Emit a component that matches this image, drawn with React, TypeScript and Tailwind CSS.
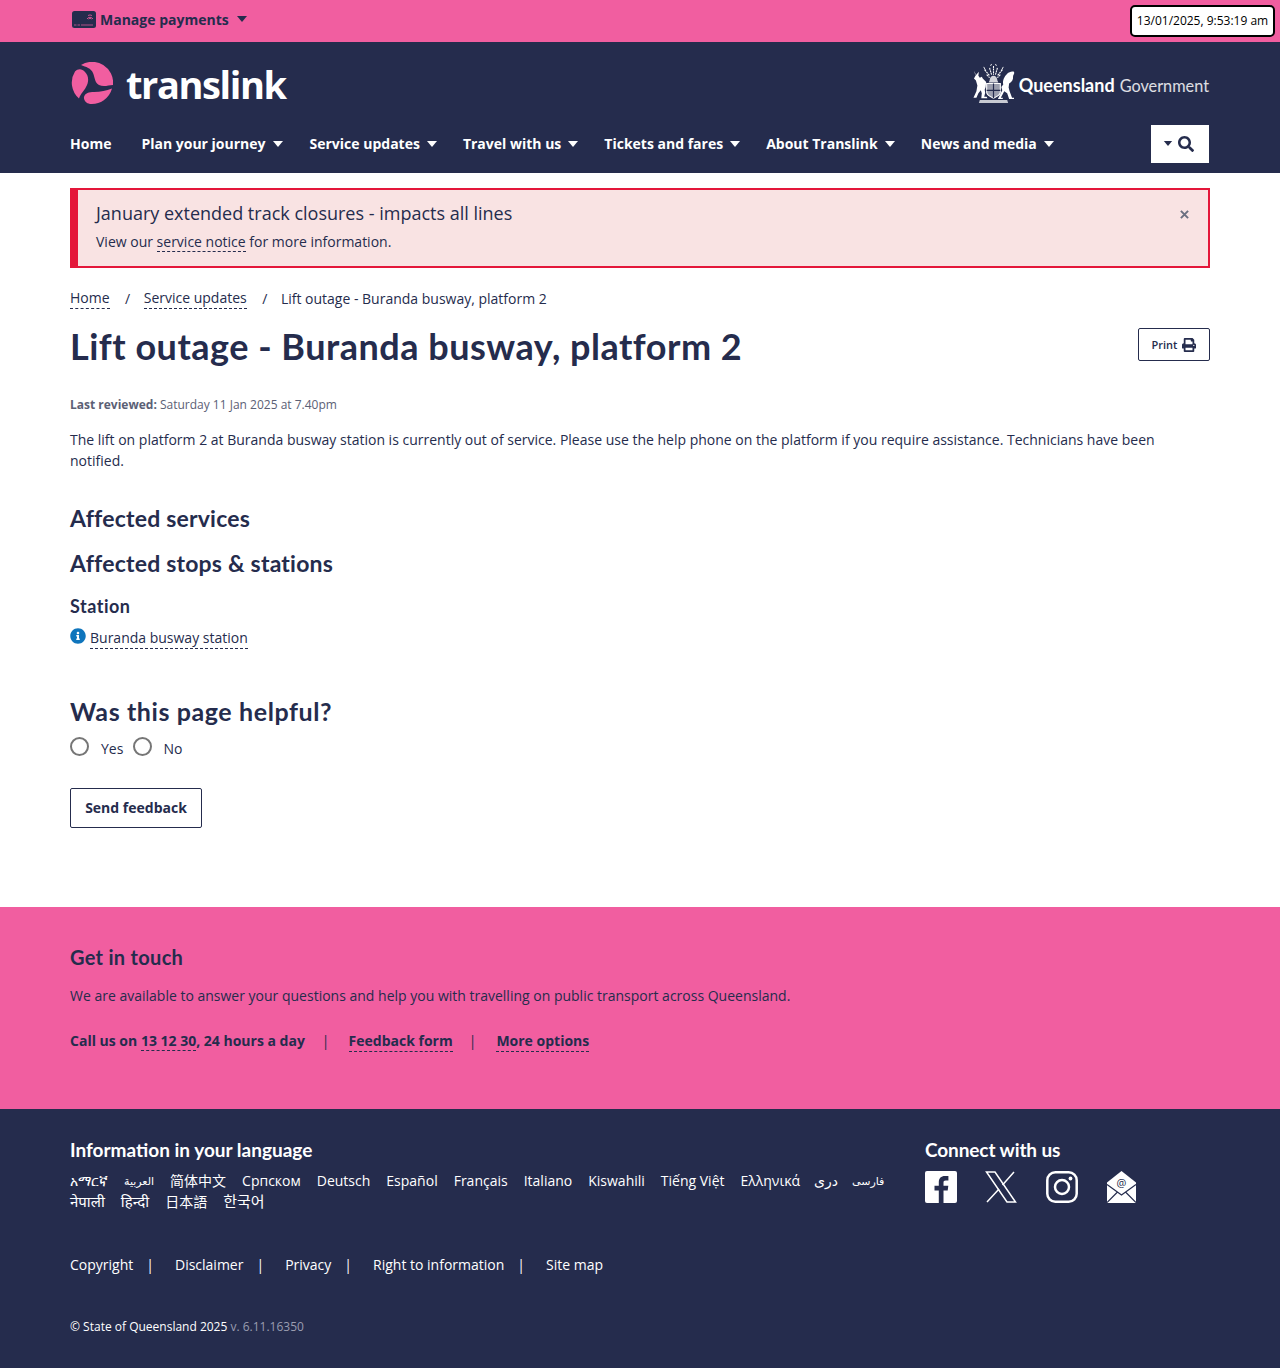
import { FaSearch, FaPrint, FaInfoCircle } from 'react-icons/fa';

const Caret = ({ className }: { className: string }) => (
  <svg viewBox="0 0 10 6" className={className} fill="currentColor"><path d="M0 0h10L5 6z" /></svg>
);

const navItems = ['Plan your journey', 'Service updates', 'Travel with us', 'Tickets and fares', 'About Translink', 'News and media'];

const languages = [
  [
    { t: 'አማርኛ', c: '' },
    { t: 'العربية', c: 'text-[11px]' },
    { t: '简体中文', c: '' },
    { t: 'Српском', c: '' },
    { t: 'Deutsch', c: '' },
    { t: 'Español', c: '' },
    { t: 'Français', c: '' },
    { t: 'Italiano', c: '' },
    { t: 'Kiswahili', c: '' },
    { t: 'Tiếng Việt', c: '' },
    { t: 'Ελληνικά', c: '' },
    { t: 'دری', c: '-ml-[2px]' },
    { t: 'فارسی', c: 'text-[11px] -ml-[2px]' },
  ],
  [
    { t: 'नेपाली', c: 'text-[15px]' },
    { t: 'हिन्दी', c: 'text-[15px]' },
    { t: '日本語', c: '' },
    { t: '한국어', c: 'text-[15px]' },
  ],
];

const legal = ['Copyright', 'Disclaimer', 'Privacy', 'Right to information'];

const Logo = () => (
  <svg viewBox="0 0 42 42" className="w-[42px] h-[42px] text-[#f15ea0]" fill="currentColor">
    <path d="M10 3A21 21 0 0 1 42 23C37 23.500 32 25 28 23 24 21 24 16 22 11 20 6 15 5 10 3z" />
    <path d="M4 9.500C7 6.500 11 6.500 14 10c4 4 4 10 1 15-2 4-5 6-7 11.500A21 21 0 0 1 4 9.500z" />
    <path d="M41 26.500A21 21 0 0 1 19 41.900C15 41.500 12.500 38 13 35c1-4 5-5 10-5 7 0 12-1.500 18-3.500z" />
  </svg>
);

const Crest = () => (
  <svg viewBox="0 0 44 42" className="w-[43px] h-[41px] text-white" fill="currentColor">
    {/* shield */}
    <path d="M15 21h14v9c0 3-3.500 4.500-7 6-3.500-1.500-7-3-7-6z" fillOpacity=".55" />
    <path d="M15 21h14v9c0 3-3.500 4.500-7 6-3.500-1.500-7-3-7-6z" fill="none" stroke="currentColor" strokeWidth="1.100" />
    <path d="M22 21v15M15 28h14" stroke="#252c4d" strokeWidth="1.200" />
    {/* helm and crest */}
    <path d="M18 18c0-3 2-5 4-5s4 2 4 5l1 2H17z" fillOpacity=".8" />
    <path d="M15 12l3 3M29 12l-3 3M22 3v9M18 5l2 7M26 5l-2 7M13 7l5 6M31 7l-5 6" stroke="currentColor" strokeWidth="1.100" strokeDasharray="2 .7" />
    <path d="M14 8l-2-4M30 8l2-4M19 3l1-2M25 3l-1-2" stroke="currentColor" strokeWidth=".9" />
    {/* stag */}
    <path d="M3 10l1.500 3L3 11 2 8zM7 9l-.5 4 1.500 2 2-1 1 2 3.500 3.500-.5 5-1 3 .5 3-1 4h2.500l.8 1.500H9.500l.5-5-1-3-2.500 3-2 4.500H1.500l3-6.500 1-6-1.500-5-2-2 1.500-3z" />
    {/* brolga side */}
    <path d="M32 22c-1-4 1-8 4-11 2-2 5-3 7-2 1 2-1 3-1 5 .5 3-1.500 5.500-4 7l-.5 4 1 4 2.500 6.500h2v1.500h-5l-2-6-3-2-3.500 6.500h2v1.500h-5l4.500-9-1-3.500z" />
    {/* scroll */}
    <path d="M8 38h28l1 3H7z" fillOpacity=".75" />
  </svg>
);

const Facebook = () => (
  <svg viewBox="0 0 32 32" className="w-[32px] h-[32px]">
    <rect width="32" height="32" rx="2" fill="#fff" />
    <path fill="#252c4d" d="M18.500 32V19.500h4.200l.6-4.800h-4.800v-3c0-1.400.4-2.300 2.400-2.300h2.500V5.100c-.4-.1-1.900-.2-3.600-.2-3.600 0-6 2.200-6 6.200v3.600H9.500v4.800h4.300V32z" />
  </svg>
);

const XLogo = () => (
  <svg viewBox="0 0 32 32" className="w-[32px] h-[32px]" fill="none" stroke="#fff" strokeWidth="1.500">
    <path d="M1.500 1h8.500l20.500 30H22z" />
    <path d="M29 1 17.500 14M14 18 2 31" />
  </svg>
);

const Instagram = () => (
  <svg viewBox="0 0 32 32" className="w-[32px] h-[32px]" fill="none" stroke="#fff" strokeWidth="2.500">
    <rect x="1.300" y="1.300" width="29.400" height="29.400" rx="8" />
    <circle cx="16" cy="16" r="7" />
    <circle cx="24.500" cy="7.500" r="1.900" fill="#fff" stroke="none" />
  </svg>
);

const MailAt = () => (
  <svg viewBox="0 0 29 32" className="w-[29px] h-[32px]">
    <path fill="#fff" d="M14.500 0 29 11.500V32H0V11.500z" />
    <path fill="none" stroke="#252c4d" strokeWidth="1.200" d="M0 13.500 14.500 24 29 13.500M0 31.500 10.500 21M29 31.500 18.500 21" />
    <text x="14.500" y="15.500" textAnchor="middle" fontSize="11" fill="#252c4d" fontFamily="'Open Sans', sans-serif">@</text>
  </svg>
);

const Dashed = ({ children, className = '' }: { children: React.ReactNode; className?: string }) => (
  <a className={`border-b border-dashed border-[#252c4d] ${className}`}>{children}</a>
);

export default function App() {
  return (
    <div className="min-h-[1368px] bg-white text-[14px] leading-[21px] text-[#252c4d] font-['Open_Sans',sans-serif]">
      {/* Top bar */}
      <div className="h-[42px] bg-[#f15ea0] relative flex items-center px-[72px] pb-[4px]">
        <svg viewBox="0 0 24 17" className="w-[24px] h-[17px] mr-[4px]">
          <rect width="24" height="17" rx="2.500" fill="#252c4d" />
          <path d="M2 14h2.500M5.500 14H8M9 14h12" stroke="#f15ea0" strokeWidth=".7" />
          <path d="M15 8a3.500 3.500 0 0 1 6 0M16.500 8a2 2 0 0 1 3 0M16 4.500a4 4 0 0 1 4 0" stroke="#f15ea0" strokeWidth=".8" fill="none" />
        </svg>
        <span className="font-bold text-[#252c4d]">Manage payments</span>
        <Caret className="w-[10px] h-[6px] ml-[8px] text-[#252c4d]" />
        <div className="absolute right-[5px] top-[5px] h-[32px] w-[145px] bg-white border-2 border-black rounded-[5px] flex items-center justify-center text-[12px] text-black whitespace-nowrap pb-[2px]">
          13/01/2025, 9:53:19 am
        </div>
      </div>

      {/* Header */}
      <header className="h-[131px] bg-[#252c4d] px-[70px] flex flex-col">
        <div className="h-[83px] flex items-center justify-between pl-[1px] pb-[1px]">
          <div className="flex items-center">
            <Logo />
            <span className="ml-[13px] text-white text-[38px] font-bold tracking-[-1.400px] leading-none pt-[2px]">translink</span>
          </div>
          <div className="flex items-center mr-px">
            <Crest />
            <span className="ml-[4px] pt-[4px] text-white text-[18px] font-['Lato',sans-serif] font-bold">Queensland</span>
            <span className="ml-[5px] pt-[4px] text-white/85 text-[16.300px] font-['Lato',sans-serif]">Government</span>
          </div>
        </div>
        <nav className="flex items-center justify-between pr-px">
          <div className="flex items-center gap-[26px] text-white font-bold whitespace-nowrap pb-[2px]">
            <span className="mr-[4px]">Home</span>
            {navItems.map((item, i) => (
              <span key={item} className={`flex items-center ${i === 0 ? 'mr-px' : ''}`}>
                {item}
                <Caret className="w-[10px] h-[6px] ml-[7px] mt-px" />
              </span>
            ))}
          </div>
          <div className="w-[58px] h-[38px] bg-white flex items-center justify-center gap-[5px] text-[#252c4d] pr-[3px]">
            <Caret className="w-[10px] h-[5px] -mt-[2px]" />
            <FaSearch className="w-[16px] h-[16px]" />
          </div>
        </nav>
      </header>

      {/* Main */}
      <main className="px-[70px] pt-[15px] h-[734px]">
        <div className="relative h-[80px] bg-[#f9e3e3] border-2 border-l-8 border-[#e4173a] pl-[18px] pt-[11px]">
          <p className="text-[18px] leading-[25px]">January extended track closures - impacts all lines</p>
          <p className="mt-[5px]">
            View our <Dashed>service notice</Dashed> for more information.
          </p>
          <svg viewBox="0 0 10 10" className="absolute right-[19px] top-[20px] w-[9px] h-[9px] text-[#6b6f80]" stroke="currentColor" strokeWidth="2.200"><path d="M1 1l8 8M9 1l-8 8" /></svg>
        </div>

        <div className="flex items-center mt-[19px]">
          <Dashed>Home</Dashed>
          <span className="ml-[15.500px] mr-[13.500px]">/</span>
          <Dashed>Service updates</Dashed>
          <span className="ml-[15.500px] mr-[13.500px]">/</span>
          <span>Lift outage - Buranda busway, platform 2</span>
        </div>

        <div className="flex items-start justify-between mt-[8px]">
          <h1 className="text-[36px] leading-[44px] font-bold tracking-[0.5px] font-['Lato',sans-serif] mt-[7px]">Lift outage - Buranda busway, platform 2</h1>
          <button className="w-[72px] h-[33px] mt-[11px] border border-[#252c4d] rounded-[2px] flex items-center justify-center text-[11px] font-semibold gap-[5px]">
            Print <FaPrint className="w-[14px] h-[14px]" />
          </button>
        </div>

        <p className="mt-[28px] text-[12px] leading-[18px] text-[#5b6075]"><b className="font-bold">Last reviewed:</b> Saturday 11 Jan 2025 at 7.40pm</p>
        <p className="mt-[15px] pr-[40px]">
          The lift on platform 2 at Buranda busway station is currently out of service. Please use the help phone on the platform if you require assistance. Technicians have been notified.
        </p>

        <h2 className="mt-[32px] text-[23px] leading-[30px] font-bold tracking-[0.2px] font-['Lato',sans-serif]">Affected services</h2>
        <h2 className="mt-[15px] text-[23px] leading-[30px] font-bold tracking-[0.2px] font-['Lato',sans-serif]">Affected stops &amp; stations</h2>
        <h3 className="mt-[16px] text-[18px] leading-[24px] font-bold tracking-[0.5px] font-['Lato',sans-serif]">Station</h3>
        <div className="flex items-start mt-[9px]">
          <FaInfoCircle className="w-[16px] h-[16px] mt-px text-[#0f75bc] mr-[4px]" />
          <Dashed>Buranda busway station</Dashed>
        </div>

        <h2 className="mt-[46px] text-[25px] leading-[32px] font-bold tracking-[0.6px] font-['Lato',sans-serif]">Was this page helpful?</h2>
        <div className="flex items-center mt-[7px]">
          <span className="w-[19px] h-[19px] rounded-full border-2 border-[#767676] bg-white" />
          <span className="ml-[12px] mt-[4px]">Yes</span>
          <span className="ml-[10px] w-[19px] h-[19px] rounded-full border-2 border-[#767676] bg-white" />
          <span className="ml-[11px] mt-[4px]">No</span>
        </div>
        <button className="mt-[29px] w-[132px] h-[40px] border border-[#252c4d] rounded-[2px] font-bold flex items-center justify-center pb-[2px]">Send feedback</button>
      </main>

      {/* Get in touch */}
      <section className="h-[202px] bg-[#f15ea0] px-[70px] pt-[37px]">
        <h2 className="text-[20px] leading-[26px] font-bold tracking-[0.3px] font-['Lato',sans-serif]">Get in touch</h2>
        <p className="mt-[15px]">We are available to answer your questions and help you with travelling on public transport across Queensland.</p>
        <div className="flex items-start mt-[24px] font-bold">
          <span>Call us on <Dashed>13 12 30</Dashed>, 24 hours a day</span>
          <span className="ml-[17px] mr-[19px] font-normal">|</span>
          <Dashed>Feedback form</Dashed>
          <span className="ml-[16px] mr-[20px] font-normal">|</span>
          <Dashed>More options</Dashed>
        </div>
      </section>

      {/* Footer */}
      <footer className="h-[259px] bg-[#252c4d] px-[70px] pt-[29px] text-white">
        <div className="flex">
          <div className="w-[855px]">
            <h2 className="text-[19px] leading-[24px] font-bold font-['Lato',sans-serif]">Information in your language</h2>
            {languages.map((row, i) => (
              <div key={i} className={`flex items-center gap-[16px] h-[21px] leading-[21px] whitespace-nowrap font-['Open_Sans','Noto_Sans','Noto_Sans_CJK_SC','DejaVu_Sans',sans-serif] ${i === 0 ? 'mt-[8px]' : ''}`}>
                {row.map((l) => <span key={l.t} className={l.c}>{l.t}</span>)}
              </div>
            ))}
          </div>
          <div>
            <h2 className="text-[19px] leading-[24px] font-bold tracking-[-0.1px] font-['Lato',sans-serif]">Connect with us</h2>
            <div className="flex items-center mt-[9px] text-white">
              <Facebook />
              <span className="ml-[28px]"><XLogo /></span>
              <span className="ml-[29px]"><Instagram /></span>
              <span className="ml-[29px]"><MailAt /></span>
            </div>
          </div>
        </div>

        <div className="flex items-center mt-[42px]">
          {legal.map((l) => (
            <span key={l} className="flex items-center">
              {l}
              <span className="ml-[13px] mr-[21px]">|</span>
            </span>
          ))}
          <span>Site map</span>
        </div>
        <p className="mt-[43px] text-[12px] leading-[18px]">© State of Queensland 2025 <span className="text-[#9a9db0]">v. 6.11.16350</span></p>
      </footer>
    </div>
  );
}
